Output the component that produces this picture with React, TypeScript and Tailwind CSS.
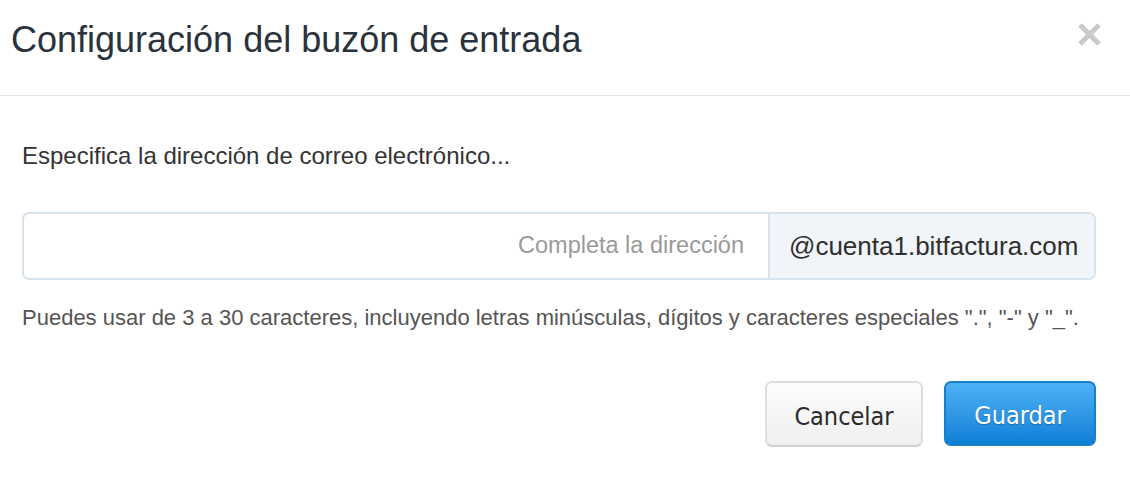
const App = () => {
  return (
    <div className="w-[1130px] h-[496px] bg-white font-['Liberation_Sans',Arial,sans-serif]">
      {/* Header */}
      <div className="h-[96px] border-b border-[#e3e3e3] flex items-start justify-between pl-[11px] pr-[28px]">
        <h1 className="mt-[21px] text-[36px] leading-[38px] text-[#2a323c]">
          Configuración del buzón de entrada
        </h1>
        <button className="mt-[22px] size-[25px] flex items-center justify-center">
          <svg viewBox="0 0 25 25" className="size-[25px]">
            <path d="M3 3 L22 22 M22 3 L3 22" stroke="#c9c9c9" strokeWidth="5" strokeLinecap="butt" />
          </svg>
        </button>
      </div>

      {/* Body */}
      <div className="px-[22px] pr-[34px]">
        <p className="mt-[46px] text-[24px] leading-[28px] text-[#333]">
          Especifica la dirección de correo electrónico...
        </p>

        <div className="mt-[42px] flex h-[68px] rounded-[7px] border-2 border-[#d6e2ed] overflow-hidden">
          <input
            className="flex-1 min-w-0 px-[24px] text-right text-[23.5px] text-[#333] outline-none placeholder:text-[#9a9a9a]"
            placeholder="Completa la dirección"
          />
          <div className="w-[326px] border-l-2 border-[#d6e2ed] bg-[#f1f4f8] flex items-center pl-[19px] text-[26px] text-[#2f2f2f]">
            @cuenta1.bitfactura.com
          </div>
        </div>

        <p className="mt-[26px] text-[22px] leading-[24px] text-[#555]">
          Puedes usar de 3 a 30 caracteres, incluyendo letras minúsculas, dígitos y caracteres especiales ".", "-" y "_".
        </p>

        <div className="mt-[51px] flex justify-end gap-[21px]">
          <button className="w-[158px] h-[66px] pt-[5px] rounded-[7px] border-2 border-[#dedede] border-b-[#cfcfcf] bg-gradient-to-b from-[#fdfdfd] to-[#eeeff0] text-[25px] text-[#2b2b2b] font-['DejaVu_Sans_Condensed','DejaVu_Sans',sans-serif]">
            Cancelar
          </button>
          <button className="w-[152px] h-[65px] pt-[5px] rounded-[7px] border-2 border-[#1a7fc6] bg-gradient-to-b from-[#4cb2f7] to-[#0a7fd6] text-[25px] text-white [text-shadow:0_1px_1px_rgba(0,0,0,0.25)] font-['DejaVu_Sans_Condensed','DejaVu_Sans',sans-serif]">
            Guardar
          </button>
        </div>
      </div>
    </div>
  );
};

export default App;
